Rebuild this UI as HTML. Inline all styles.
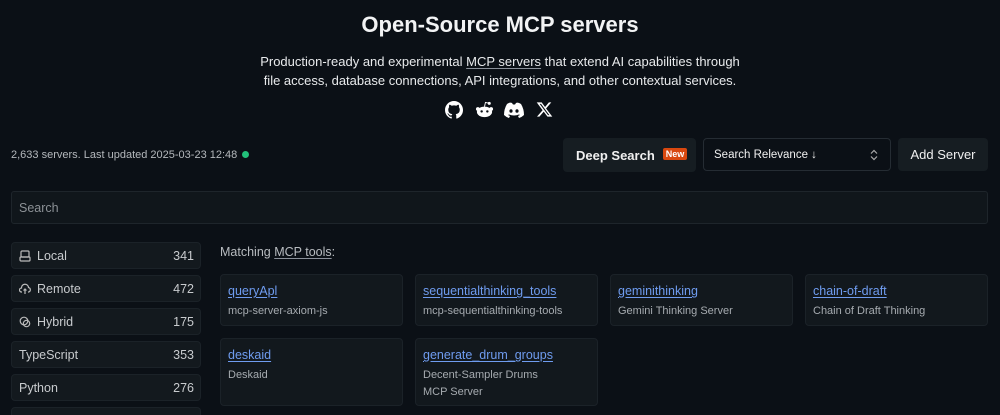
<!DOCTYPE html>
<html><head><meta charset="utf-8"><style>
*{box-sizing:border-box;margin:0;padding:0}
html,body{width:1000px;height:415px;overflow:hidden}
body{background:#0b1016;color:#e6e8ea;font-family:"Liberation Sans",sans-serif;position:relative}
.a{position:absolute}
h1{position:absolute;top:12px;width:100%;text-align:center;font-size:22px;font-weight:700;color:#f2f3f4}
.desc{position:absolute;top:52px;width:100%;text-align:center;font-size:13px;line-height:19px;color:#e8eaec}
u{text-decoration-color:#8a9099;text-underline-offset:2px}
.btn{position:absolute;background:#161d22;border-radius:4px;font-size:13px;font-weight:700;color:#f0f0f0;display:flex;align-items:center}
.side{position:absolute;left:11px;width:190px;height:27px;background:#13191e;border:1px solid #1b2228;border-radius:4px;font-size:12.5px;color:#c8cbce;display:flex;align-items:center;padding:0 6px 0 7px}
.side span{margin-left:auto}
.side svg{margin-right:6px}
.card{position:absolute;width:183px;background:#12181d;border:1px solid #1b2228;border-radius:4px;padding:9px 7px}
.card a{color:#6f9cf0;font-size:12.5px;text-decoration:underline;text-underline-offset:2px;display:block}
.card div{color:#a6abb0;font-size:11px;margin-top:5px;line-height:17px}
svg{display:block}
</style></head><body>
<h1>Open-Source MCP servers</h1>
<div class="desc">Production-ready and experimental <u>MCP servers</u> that extend AI capabilities through<br>file access, database connections, API integrations, and other contextual services.</div>
<div class="a" style="left:445px;top:101px"><svg width="18" height="18" viewBox="0 0 16 16" fill="#fff"><path d="M8 0C3.58 0 0 3.58 0 8c0 3.54 2.29 6.530 5.47 7.59.4.07.55-.17.55-.38v-1.33c-2.23.48-2.7-1.070-2.7-1.070-.36-.92-.89-1.17-.89-1.17-.73-.5.05-.49.05-.49.8.06 1.23.83 1.23.83.71 1.22 1.87.87 2.33.66.07-.52.28-.87.51-1.070-1.78-.2-3.64-.89-3.64-3.95 0-.87.31-1.59.82-2.15-.08-.2-.36-1.02.08-2.12 0 0 .67-.21 2.2.82a7.6 7.6 0 0 1 4 0c1.53-1.04 2.2-.82 2.2-.82.44 1.1.16 1.92.08 2.12.51.56.82 1.27.82 2.15 0 3.07-1.87 3.75-3.65 3.95.29.25.54.73.54 1.48v2.2c0 .21.15.46.55.38A8 8 0 0 0 16 8c0-4.42-3.58-8-8-8z"/></svg></div>
<div class="a" style="left:475px;top:101px"><svg width="19" height="18" viewBox="0 0 20 18"><ellipse cx="10" cy="11" rx="8" ry="5.5" fill="#fff"/><circle cx="3" cy="8" r="2" fill="#fff"/><circle cx="17" cy="8" r="2" fill="#fff"/><circle cx="15" cy="2" r="1.6" fill="#fff"/><path d="M10 5.5L11 1l4 1" stroke="#fff" fill="none"/><circle cx="7" cy="10.5" r="1.3" fill="#0b1016"/><circle cx="13" cy="10.5" r="1.3" fill="#0b1016"/></svg></div>
<div class="a" style="left:504px;top:102px"><svg width="20" height="16" viewBox="0 0 20 16"><path d="M3 2Q6 0 8 1L9 2.5h2L12 1q2-1 5 1 3 5 3 11-2 2-5 3l-1-2 2-1-1-.5q-5 2-10 0L4 13l2 1-1 2Q2 15 0 13 0 7 3 2z" fill="#fff"/><ellipse cx="7" cy="9" rx="1.6" ry="1.8" fill="#0b1016"/><ellipse cx="13" cy="9" rx="1.6" ry="1.8" fill="#0b1016"/></svg></div>
<div class="a" style="left:536px;top:101px"><svg width="17" height="17" viewBox="0 0 24 24" fill="#fff"><path d="M18.2 2h3.4l-7.4 8.5L23 22h-6.8l-5.3-7-6.1 7H1.4l7.9-9L1 2h7l4.8 6.4L18.2 2zm-1.2 18h1.9L7.1 4H5.1l11.9 16z"/></svg></div>

<div class="a" style="left:11px;top:149px;font-size:11px;color:#b4b8bc">2,633 servers. Last updated 2025-03-23 12:48 <span style="display:inline-block;width:7px;height:7px;border-radius:50%;background:#22c07a;margin-left:2px;vertical-align:0"></span></div>
<div class="btn" style="left:563px;top:138px;width:133px;height:34px;padding-left:13px">Deep Search <span style="background:#d9480f;color:#fff;font-size:9px;padding:1px 3px;border-radius:2px;margin-left:8px;position:relative;top:-1px">New</span></div>
<div class="btn" style="left:703px;top:138px;width:188px;height:33px;background:#0b1016;border:1px solid #252c33;font-weight:400;font-size:11.5px;padding-left:10px">Search Relevance ↓<svg style="margin-left:auto;margin-right:12px" width="8" height="12" viewBox="0 0 8 12"><path d="M1 4.5L4 1.5 7 4.5M1 7.5L4 10.5 7 7.5" stroke="#aaa" fill="none" stroke-width="1.2"/></svg></div>
<div class="btn" style="left:898px;top:138px;width:90px;height:33px;justify-content:center;font-weight:400;font-size:13px">Add Server</div>
<div class="a" style="left:11px;top:191px;width:977px;height:33px;background:#10161b;border:1px solid #1e252b;border-radius:3px;padding:9px 7px;font-size:12.5px;color:#8c9196">Search</div>

<div class="side" style="top:242px"><svg width="12" height="12" viewBox="0 0 12 12" fill="none" stroke="#bbb" stroke-width="1.2"><rect x="2" y="1" width="8" height="6" rx="1"/><rect x="1" y="7" width="10" height="4" rx="1"/></svg>Local<span>341</span></div>
<div class="side" style="top:275px"><svg width="12" height="12" viewBox="0 0 12 12" fill="none" stroke="#bbb" stroke-width="1.2"><path d="M3 9H2.5A2 2 0 0 1 2.5 5 3.5 3.5 0 0 1 9.5 4.5 2.3 2.3 0 0 1 9.5 9H9M6 11V6M4.5 7.5L6 6l1.5 1.5"/></svg>Remote<span>472</span></div>
<div class="side" style="top:308px"><svg width="12" height="12" viewBox="0 0 12 12" fill="none" stroke="#bbb" stroke-width="1.2"><circle cx="5" cy="5" r="3.8"/><circle cx="7.5" cy="7.5" r="3.2"/></svg>Hybrid<span>175</span></div>
<div class="side" style="top:341px">TypeScript<span>353</span></div>
<div class="side" style="top:374px">Python<span>276</span></div>
<div class="side" style="top:407px"></div>

<div class="a" style="left:220px;top:245px;font-size:12.5px;color:#b8bcc0">Matching <u>MCP tools</u>:</div>
<div class="card" style="left:220px;top:274px;height:52px"><a>queryApl</a><div>mcp-server-axiom-js</div></div>
<div class="card" style="left:415px;top:274px;height:52px"><a>sequentialthinking_tools</a><div>mcp-sequentialthinking-tools</div></div>
<div class="card" style="left:610px;top:274px;height:52px"><a>geminithinking</a><div>Gemini Thinking Server</div></div>
<div class="card" style="left:805px;top:274px;height:52px"><a>chain-of-draft</a><div>Chain of Draft Thinking</div></div>
<div class="card" style="left:220px;top:338px;height:68px"><a>deskaid</a><div>Deskaid</div></div>
<div class="card" style="left:415px;top:338px;height:68px"><a>generate_drum_groups</a><div>Decent-Sampler Drums<br>MCP Server</div></div>
</body></html>
